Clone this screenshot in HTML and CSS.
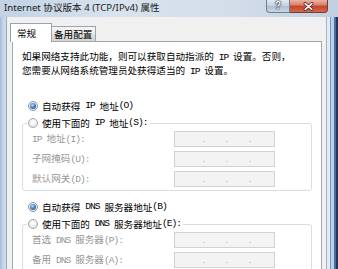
FILE: index.html
```html
<!DOCTYPE html>
<html lang="zh-CN">
<head>
<meta charset="utf-8">
<title>Internet 协议版本 4 (TCP/IPv4) 属性</title>
<link rel="stylesheet" href="styles.css">
</head>
<body>
<div class="window">
  <div class="titlebar">
    <span class="title">Internet 协议版本 4 (TCP/IPv4) 属性</span>
    <div class="caption-buttons">
      <span class="cbtn help">?</span>
      <span class="cbtn close"><svg width="11" height="9" viewBox="0 0 11 9"><path d="M2.2 1.6 L8.8 7.4 M8.8 1.6 L2.2 7.4" stroke="#4a1d14" stroke-width="3.2" stroke-linecap="round" fill="none"/><path d="M2.2 1.6 L8.8 7.4 M8.8 1.6 L2.2 7.4" stroke="#fff" stroke-width="1.7" stroke-linecap="round" fill="none"/></svg></span>
    </div>
  </div>
  <div class="frame">
    <div class="edge-left"></div>
    <div class="client">
      <div class="tabs">
        <span class="tab active">常规</span>
        <span class="tab">备用配置</span>
      </div>
      <div class="panel">
        <p class="desc">如果网络支持此功能，则可以获取自动指派的<span class="a"> IP </span>设置。否则，<br>您需要从网络系统管理员处获得适当的<span class="a"> IP </span>设置。</p>

        <div class="radio-row first"><span class="radio checked"></span>自动获得<span class="a"> IP </span>地址<span class="a">(O)</span></div>
        <fieldset class="group">
          <legend><span class="radio"></span>使用下面的<span class="a"> IP </span>地址<span class="a">(S):</span></legend>
          <div class="field"><span class="lbl"><span class="a">IP </span>地址<span class="a">(I):</span></span><span class="ip"><span class="seg"></span><span class="dot">.</span><span class="seg"></span><span class="dot">.</span><span class="seg"></span><span class="dot">.</span><span class="seg"></span></span></div>
          <div class="field"><span class="lbl">子网掩码<span class="a">(U):</span></span><span class="ip"><span class="seg"></span><span class="dot">.</span><span class="seg"></span><span class="dot">.</span><span class="seg"></span><span class="dot">.</span><span class="seg"></span></span></div>
          <div class="field"><span class="lbl">默认网关<span class="a">(D):</span></span><span class="ip"><span class="seg"></span><span class="dot">.</span><span class="seg"></span><span class="dot">.</span><span class="seg"></span><span class="dot">.</span><span class="seg"></span></span></div>
        </fieldset>

        <div class="radio-row second"><span class="radio checked"></span>自动获得<span class="a"> DNS </span>服务器地址<span class="a">(B)</span></div>
        <fieldset class="group">
          <legend><span class="radio"></span>使用下面的<span class="a"> DNS </span>服务器地址<span class="a">(E):</span></legend>
          <div class="field"><span class="lbl">首选<span class="a"> DNS </span>服务器<span class="a">(P):</span></span><span class="ip"><span class="seg"></span><span class="dot">.</span><span class="seg"></span><span class="dot">.</span><span class="seg"></span><span class="dot">.</span><span class="seg"></span></span></div>
          <div class="field"><span class="lbl">备用<span class="a"> DNS </span>服务器<span class="a">(A):</span></span><span class="ip"><span class="seg"></span><span class="dot">.</span><span class="seg"></span><span class="dot">.</span><span class="seg"></span><span class="dot">.</span><span class="seg"></span></span></div>
        </fieldset>
      </div>
    </div>
    <div class="edge-right"></div>
  </div>
</div>
</body>
</html>
```

FILE: styles.css
```css
* { box-sizing: border-box; margin: 0; padding: 0; }

html, body {
  width: 338px;
  height: 269px;
  overflow: hidden;
}

body {
  font-family: "Noto Sans CJK SC", sans-serif;
  font-size: 9.6px;
  line-height: 12px;
  color: #000;
  background: #c9d7e6;
}

.a {
  font-family: "Liberation Mono", monospace;
  letter-spacing: -0.96px;
  white-space: pre;
}

.window {
  display: flex;
  flex-direction: column;
  height: 269px;
  background: linear-gradient(90deg, #c2d2e3 0, #d8e3ee 35%, #d2dde9 70%, #c0d0e1 100%);
}

/* title bar */
.titlebar {
  height: 17px;
  display: flex;
  align-items: flex-start;
  padding: 0 10px 0 4px;
  flex: none;
}

.title {
  font-family: "Noto Sans", "Noto Sans CJK SC", sans-serif;
  font-size: 9.6px;
  line-height: 15px;
  color: #1a1a1a;
}

.caption-buttons {
  margin-left: auto;
  display: flex;
}

.cbtn {
  height: 13px;
  display: flex;
  align-items: center;
  justify-content: center;
  border: 1px solid #6f7f93;
  border-top: 0;
}

.help {
  width: 24px;
  border-radius: 0 0 0 4px;
  background: linear-gradient(#e3eaf2 0, #c4d1df 48%, #aebfd2 52%, #c9d7e6 100%);
  color: #fff;
  font: bold 10px/1 "Liberation Sans", sans-serif;
  text-shadow: 0 0 1px #1b2a3e, 0 0 1px #1b2a3e, 0 0 2px #1b2a3e;
}

.close {
  width: 38px;
  border-left: 0;
  border-color: #7a3a2e;
  border-radius: 0 0 4px 0;
  background: linear-gradient(#eab3a6 0, #d9806b 42%, #c5432b 52%, #d26a50 100%);
}

/* frame */
.frame {
  flex: 1;
  display: flex;
  min-height: 0;
}

.edge-left {
  width: 6px;
  flex: none;
  background: linear-gradient(90deg, #a7bed8 0, #c4d4e6 3px, #d3dfeb 6px);
}

.edge-right {
  width: 12px;
  flex: none;
  background: linear-gradient(90deg,
    #a4b3c6 0, #a4b3c6 1px,
    #e2ebf4 1px, #e2ebf4 4px,
    #7e94b1 4px, #7e94b1 5px,
    #b8d2ec 5px, #b8d2ec 8px,
    #4d6c9b 8px, #4d6c9b 10px,
    #23375e 10px);
}

.client {
  flex: 1;
  display: flex;
  flex-direction: column;
  background: #f0f0f0;
  border-left: 1px solid #98a9bd;
  padding: 6px 4px 0 5px;
  min-width: 0;
}

/* tabs */
.tabs {
  display: flex;
  align-items: flex-end;
  margin: 0 0 -1px -2px;
  position: relative;
  z-index: 1;
}

.tab {
  width: 44px;
  height: 15px;
  margin-bottom: 1px;
  padding-left: 2px;
  display: flex;
  align-items: center;
  border: 1px solid #9ea2a9;
  border-bottom: 0;
  border-left: 0;
  background: linear-gradient(#f6f6f6 0, #ececec 50%, #dedede 51%, #d4d4d4 100%);
  line-height: 12px;
}

.tab.active {
  width: 42px;
  height: 19px;
  margin-bottom: 0;
  padding-left: 6px;
  border-left: 1px solid #9ea2a9;
  background: #fff;
}

/* panel */
.panel {
  flex: 1;
  background: #fff;
  border: 1px solid #a3a7ae;
  padding: 8px 9px 0 9px;
}

.desc {
  white-space: nowrap;
}

.radio-row {
  display: flex;
  align-items: center;
  height: 16px;
  padding-left: 6px;
}

.radio-row.first { margin-top: 20px; }
.radio-row.second { margin-top: 8px; }

.radio {
  flex: none;
  width: 10px;
  height: 10px;
  margin-right: 4px;
  border-radius: 50%;
  border: 1px solid #a2a6ab;
  background: radial-gradient(circle at 50% 40%, #ffffff 0, #ececec 60%, #d6d6d6 100%);
  display: flex;
  align-items: center;
  justify-content: center;
}

.radio.checked {
  border-color: #8a97a8;
}

.radio.checked::after {
  content: "";
  width: 6px;
  height: 6px;
  border-radius: 50%;
  background: radial-gradient(circle at 40% 35%, #c4e2ff 0, #4c8fd0 40%, #113f7c 100%);
}

/* group boxes */
.group {
  margin-top: 1px;
  border: 1px solid #d5dfe5;
  border-radius: 3px;
  padding: 0 0 3px 0;
  min-width: 0;
}

.group legend {
  display: flex;
  align-items: center;
  height: 16px;
  margin-left: 4px;
  padding: 0 2px 0 1px;
}

.field {
  display: flex;
  align-items: center;
  height: 16px;
  padding-left: 9px;
  color: #979797;
}

.field + .field { margin-top: 4px; }

.lbl {
  width: 142px;
  flex: none;
}

.ip {
  width: 101px;
  height: 16px;
  display: flex;
  padding-left: 8px;
  border: 1px solid #d2d2d2;
  background: #f3f3f3;
  color: #a4a4a4;
  font-family: "Liberation Sans", sans-serif;
  font-size: 9px;
  line-height: 14px;
}

.seg { width: 19px; flex: none; }
.dot { width: 4px; flex: none; text-align: center; }
```
